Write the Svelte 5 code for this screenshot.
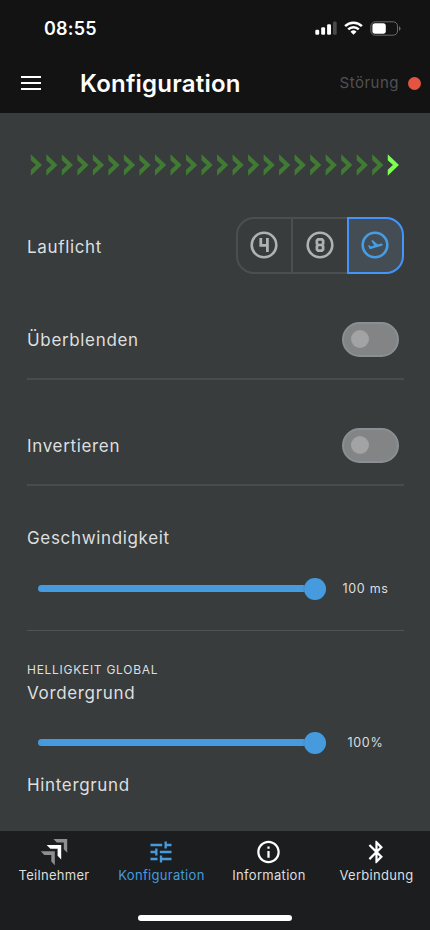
<script>
  const chevrons = Array.from({ length: 24 }, (_, i) => i);

  let mode = "flight";
  let switches = [
    { label: "Überblenden", checked: false },
    { label: "Invertieren", checked: false },
  ];

  const modes = ["four", "eight", "flight"];

  const tabs = [
    { id: "members", label: "Teilnehmer" },
    { id: "config", label: "Konfiguration" },
    { id: "info", label: "Information" },
    { id: "connection", label: "Verbindung" },
  ];
  let activeTab = "config";

  const toggle = (item) => {
    item.checked = !item.checked;
    switches = switches;
  };
</script>

<div class="app">
  <header>
    <div class="status-bar">
      <span class="time">08:55</span>
      <div class="status-icons">
        <svg width="22" height="14" viewBox="0 0 22 14">
          <rect x="0.3" y="8.8" width="3.9" height="5" rx="1.2" fill="#fff" />
          <rect x="6.2" y="6.3" width="3.9" height="7.5" rx="1.2" fill="#fff" />
          <rect x="12.1" y="3.3" width="3.9" height="10.5" rx="1.2" fill="#fff" />
          <rect x="18" y="0.5" width="3.7" height="13.3" rx="1.2" fill="#4a4a4a" />
        </svg>
        <svg width="19" height="14" viewBox="0 0 19 14" fill="none" stroke="#fff" stroke-width="2.5">
          <path d="M1.1 5.2a12 12 0 0 1 16.8 0" />
          <path d="M4.2 8.4a7.6 7.6 0 0 1 10.6 0" />
          <path d="M9.5 13.8 6.5 10.8a4.3 4.3 0 0 1 6 0z" fill="#fff" stroke="none" />
        </svg>
        <svg width="31" height="15" viewBox="0 0 31 15">
          <rect x="0.9" y="0.8" width="26.6" height="13.4" rx="4.2" fill="none" stroke="#6b6b6b" />
          <rect x="2.4" y="2.3" width="13.4" height="10.4" rx="2.6" fill="#fff" />
          <path d="M29 5.2q1.5.6 1.5 2.3T29 9.8z" fill="#6b6b6b" />
        </svg>
      </div>
    </div>
    <div class="toolbar">
      <button class="menu" aria-label="Menü">
        <span></span>
        <span></span>
        <span></span>
      </button>
      <h1>Konfiguration</h1>
      <span class="fault">Störung</span>
      <span class="dot"></span>
    </div>
  </header>

  <main>
    <svg class="chevrons" width="377" height="22" viewBox="0 0 377 22">
      {#each chevrons as i}
        <path
          class:lit={i === chevrons.length - 1}
          transform="translate({3.8 + i * 15.52} 0)"
          d="M0 .3 11.2 11 0 21.7V15.8L5.2 11 0 6.2z"
        />
      {/each}
    </svg>

    <div class="row lights">
      <span class="label">Lauflicht</span>
      <div class="segments">
        {#each modes as m}
          <button class:selected={mode === m} aria-label={m} on:click={() => (mode = m)}>
            <svg width="28" height="28" viewBox="0 0 28 28" fill="none" stroke="currentColor" stroke-width="2.6">
              <circle cx="14" cy="14" r="12.3" />
              {#if m === "four"}
                <path d="M10.8 7v7.4h6.6M17.4 7v14" stroke-width="2.8" />
              {:else if m === "eight"}
                <path
                  d="M12.1 8.3h3.8l1.2 1.2v3.1L15.7 14l1.4 1.4v3.1l-1.2 1.2h-3.8l-1.2-1.2v-3.1l1.4-1.4-1.4-1.4V9.5zM12 14h4"
                  stroke-width="2.7"
                />
              {:else}
                <path
                  d="M7 14.5l1.2-.3 1.8 1.2 3.1-.8-2.8-5 1.6-.4 4.9 4.3 3.3-.9c.7-.2 1.4.2 1.5.8.2.6-.2 1.2-.8 1.4L9.7 18.1l-.9.2z"
                  fill="currentColor"
                  stroke="none"
                />
              {/if}
            </svg>
          </button>
        {/each}
      </div>
    </div>

    {#each switches as item}
      <div class="row option">
        <span class="label">{item.label}</span>
        <button
          class="switch"
          class:on={item.checked}
          role="switch"
          aria-checked={item.checked}
          aria-label={item.label}
          on:click={() => toggle(item)}
        >
          <span class="knob"></span>
        </button>
      </div>
    {/each}

    <section class="speed">
      <span class="label">Geschwindigkeit</span>
      <div class="slider">
        <div class="track"><span class="thumb"></span></div>
        <span class="value">100 ms</span>
      </div>
    </section>

    <section class="brightness">
      <h2>HELLIGKEIT GLOBAL</h2>
      <span class="label">Vordergrund</span>
      <div class="slider">
        <div class="track"><span class="thumb"></span></div>
        <span class="value percent">100%</span>
      </div>
      <span class="label">Hintergrund</span>
    </section>
  </main>

  <footer>
    <nav>
      {#each tabs as tab}
        <button class="tab" class:active={activeTab === tab.id} on:click={() => (activeTab = tab.id)}>
          {#if tab.id === "members"}
            <svg width="28" height="28" viewBox="0 0 28 28">
              <path d="M13.4 1h13.8v13.8l-3.4-3.6V4.6h-7z" fill="#8e8f90" />
              <path d="M.8 13.2h14v14l-3.5-3.7v-6.6h-7z" fill="#8e8f90" />
              <path d="M6.6 7h14.6v14.6l-3.6-3.8v-7h-7.2z" fill="#fff" />
            </svg>
          {:else if tab.id === "config"}
            <svg width="28" height="28" viewBox="0 0 24 24" fill="currentColor">
              <path
                d="M3 17v2h6v-2H3zM3 5v2h10V5H3zm10 16v-2h8v-2h-8v-2h-2v6h2zM7 9v2H3v2h4v2h2V9H7zm14 4v-2H11v2h10zm-6-4h2V7h4V5h-4V3h-2v6z"
              />
            </svg>
          {:else if tab.id === "info"}
            <svg width="27" height="27" viewBox="0 0 24 24" fill="currentColor">
              <path
                d="M11 7h2v2h-2zm0 4h2v6h-2zm1-9C6.48 2 2 6.48 2 12s4.48 10 10 10 10-4.48 10-10S17.52 2 12 2zm0 18c-4.41 0-8-3.59-8-8s3.59-8 8-8 8 3.59 8 8-3.59 8-8 8z"
              />
            </svg>
          {:else}
            <svg width="27" height="27" viewBox="0 0 24 24" fill="currentColor">
              <path
                d="M17.71 7.71L12 2h-1v7.59L6.41 5 5 6.41 10.59 12 5 17.59 6.41 19 11 14.41V22h1l5.71-5.71-4.3-4.29 4.3-4.29zM13 5.83l1.88 1.88L13 9.59V5.83zm1.88 10.46L13 18.17v-3.76l1.88 1.88z"
              />
            </svg>
          {/if}
          <span>{tab.label}</span>
        </button>
      {/each}
    </nav>
    <div class="home-indicator"></div>
  </footer>
</div>

<style>
  :global(body) {
    margin: 0;
    background: #383c3d;
  }

  .app {
    width: 430px;
    height: 930px;
    display: flex;
    flex-direction: column;
    overflow: hidden;
    font-family: Inter, "Liberation Sans", sans-serif;
    color: #dedfdf;
    background: #383c3d;
  }

  button {
    appearance: none;
    border: none;
    padding: 0;
    margin: 0;
    background: none;
    color: inherit;
    font: inherit;
    cursor: pointer;
  }

  svg {
    display: block;
    flex: none;
  }

  header {
    flex: none;
    box-sizing: border-box;
    height: 113px;
    background: #131313;
  }

  .status-bar {
    box-sizing: border-box;
    height: 56px;
    padding: 0 29px 0 44px;
    display: flex;
    align-items: center;
    justify-content: space-between;
  }

  .time {
    font-size: 18px;
    font-weight: 600;
    line-height: 24px;
    letter-spacing: 0.2px;
    color: #fff;
    margin-top: 2px;
  }

  .status-icons {
    display: flex;
    align-items: center;
    gap: 7px;
  }

  .toolbar {
    box-sizing: border-box;
    height: 54px;
    padding: 0 9px 0 21px;
    display: flex;
    align-items: center;
  }

  .menu {
    width: 20px;
    display: flex;
    flex-direction: column;
    gap: 4px;
  }

  .menu span {
    height: 2px;
    background: #fff;
  }

  h1 {
    flex: 1;
    margin: 2px 0 0 39px;
    font-size: 24px;
    font-weight: 600;
    line-height: 32px;
    letter-spacing: 0.22px;
    color: #fff;
  }

  .fault {
    font-size: 15px;
    line-height: 20px;
    letter-spacing: 0.5px;
    color: #505152;
    margin-right: 9px;
  }

  .dot {
    width: 13px;
    height: 13px;
    border-radius: 50%;
    background: #e55441;
  }

  main {
    flex: 1;
    min-height: 0;
    overflow: hidden;
    padding: 41px 26px 0 27px;
  }

  .chevrons path {
    fill: #417b33;
  }

  .chevrons path.lit {
    fill: #7dff51;
  }

  .row {
    display: flex;
    align-items: center;
    justify-content: space-between;
  }

  .label {
    display: block;
    font-size: 17px;
    line-height: 24px;
    letter-spacing: 0.66px;
  }

  .row .label {
    padding-top: 2px;
  }

  .lights {
    height: 57px;
    margin-top: 41px;
  }

  .segments {
    display: flex;
  }

  .segments button {
    box-sizing: border-box;
    width: 57px;
    height: 57px;
    padding: 0 1px 1px 0;
    display: flex;
    align-items: center;
    justify-content: center;
    border: 2px solid #4c4f51;
    color: #b0b1b2;
  }

  .segments button + button {
    margin-left: -1.5px;
  }

  .segments button:nth-child(2) {
    border-left-color: transparent;
  }

  .segments button:first-child {
    border-radius: 18px 0 0 18px;
  }

  .segments button:last-child {
    border-radius: 0 18px 18px 0;
  }

  .segments .selected {
    border-color: #4395fb;
    background: #454d54;
    color: #459ee5;
  }

  .option {
    box-sizing: border-box;
    height: 106px;
    padding: 26px 5px 0 0;
    border-bottom: 2px solid #484c4d;
  }

  .switch {
    box-sizing: border-box;
    width: 57px;
    height: 35px;
    padding-left: 6.5px;
    display: flex;
    align-items: center;
    border: 2px solid #8a8f95;
    border-radius: 18px;
    background: #828485;
  }

  .switch.on {
    background: #459bde;
  }

  .switch.on .knob {
    margin-left: 20px;
  }

  .knob {
    width: 18px;
    height: 18px;
    border-radius: 50%;
    background: #a1a3a4;
  }

  .speed {
    box-sizing: border-box;
    height: 145px;
    padding-top: 40px;
    border-bottom: 1px solid #515455;
  }

  .slider {
    height: 22px;
    display: flex;
    align-items: center;
    padding-left: 10.5px;
  }

  .speed .slider {
    margin-top: 27.5px;
  }

  .track {
    width: 288.5px;
    height: 7px;
    border-radius: 4px;
    display: flex;
    align-items: center;
    justify-content: flex-end;
    background: #459bde;
  }

  .thumb {
    flex: none;
    width: 22px;
    height: 22px;
    border-radius: 50%;
    background: #459bde;
    box-shadow: 0 0 1px #2e506b;
  }

  .value {
    font-size: 12.5px;
    letter-spacing: 0.7px;
    margin-left: 16.5px;
  }

  .percent {
    margin-left: 21.5px;
  }

  .brightness {
    padding-top: 31px;
  }

  h2 {
    margin: 0 0 3px;
    font-size: 12px;
    font-weight: 400;
    line-height: 16px;
    letter-spacing: 0.72px;
  }

  .brightness .slider {
    margin: 26.5px 0 19.5px;
  }

  footer {
    flex: none;
    box-sizing: border-box;
    height: 99px;
    padding-bottom: 9px;
    display: flex;
    flex-direction: column;
    justify-content: space-between;
    background: #1c1d1f;
  }

  nav {
    display: grid;
    grid-template-columns: repeat(4, 1fr);
    padding-top: 7px;
  }

  .tab {
    display: flex;
    flex-direction: column;
    align-items: center;
    color: #fff;
  }

  .tab svg {
    height: 28px;
  }

  .tab span {
    font-size: 13px;
    line-height: 18px;
    letter-spacing: 0.3px;
    color: #dedfdf;
    padding-left: 0.5px;
  }

  .tab.active,
  .tab.active span {
    color: #459bde;
  }

  .home-indicator {
    width: 154px;
    height: 6px;
    border-radius: 3px;
    align-self: center;
    background: #fff;
  }
</style>
